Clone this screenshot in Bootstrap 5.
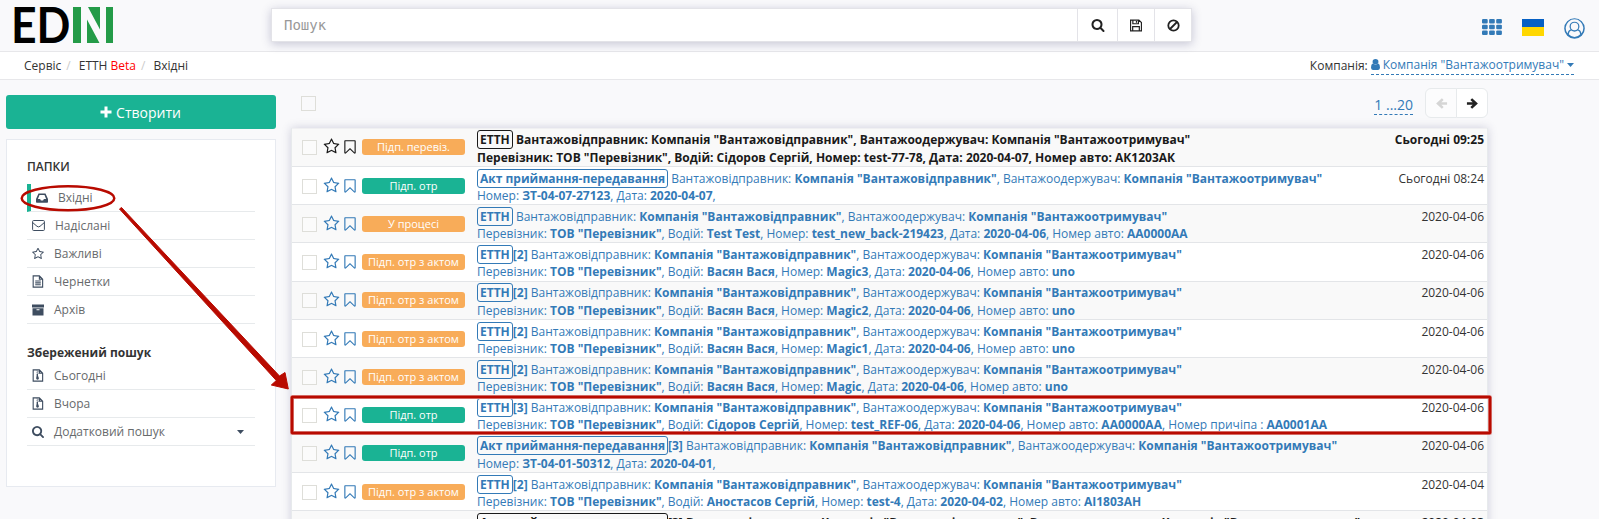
<!DOCTYPE html>
<html lang="uk">
<head>
<meta charset="utf-8">
<title>EDIN – Вхідні</title>
<link rel="stylesheet" href="https://cdn.jsdelivr.net/npm/bootstrap@5.3.0/dist/css/bootstrap.min.css">
<style>
  body { font-family: "Open Sans", "Noto Sans", sans-serif; font-size: 12px; line-height: 17.14px; color: #333; background: #f9f9fb; height: 519px; overflow: hidden; position: relative; }
  svg { display: block; fill: currentColor; flex: none; }
  .topbar { height: 52px; border-bottom: 1px solid #e7e7ea; padding-left: 15px; }
  .brand { width: 98px; margin-top: 7px; margin-right: 158px; overflow: visible; }
  .finder { width: 921px; height: 34px; margin-top: 8px; border: 1px solid #e3e3e8; background: #fff; box-shadow: 0 2px 9px rgba(60, 60, 110, .27); }
  .finder input { border: 0; padding: 0 12px; font: 14px "DejaVu Sans Mono", monospace; outline: 0; background: none; }
  .finder input::placeholder { color: #999; opacity: 1; }
  .finder button { border: 0; border-left: 1px solid #e3e3e8; background: #fff; padding: 0; color: #222; }
  .tools { color: #337ab7; padding-right: 14px; height: 54px; }
  .flag { width: 22px; height: 17px; background: linear-gradient(#0660c4 50%, #ffd700 50%); }
  .crumbs { height: 28px; background: #fff; border-bottom: 1px solid #e7e7ea; padding: 0 25px 0 24px; }
  .crumbs .sep { color: #ccc; padding: 0 8px 0 5px; }
  .dashed { color: #337ab7; border-bottom: 1px dashed #337ab7; text-decoration: none; }
  .side { width: 270px; margin: 15px 0 0 6px; }
  .btn-create { height: 34px; background: #1ab394; color: #fff; border-radius: 3px; font-size: 14px; padding: 0 1px 0 0; border: 0; }
  .btn-create:hover { background: #18a689; color: #fff; }
  .folders { margin-top: 10px; height: 348px; background: #fff; border: 1px solid #e7eaf0; padding: 18px 20px 0; }
  .folders h2 { font-size: 12px; line-height: 17px; margin: 0; font-weight: 600; }
  .folders .entry { height: 28px; border-bottom: 1px solid #e7eaec; color: #676a6c; text-decoration: none; padding-left: 5px; }
  .entry svg { color: #3e4d60; margin-right: 10px; }
  .entry.current { border-left: 4px solid #1ab394; }
  .content { width: 1197px; margin-left: 15px; }
  .box { width: 15px; height: 15px; border: 1px solid #deded9; flex: none; }
  .listbar { height: 47.65px; padding: 16px 0 0 10px; }
  .pager { font-size: 14px; line-height: 18px; height: 19px; margin-right: 12px; }
  .turn { margin: -8px 0 0; }
  .turn button { width: 32px; height: 30px; border: 1px solid #e7eaec; background: #fff; padding: 0; }
  .docs { border: 1px solid #e7eaec; border-top: 0; box-shadow: 0 0 9px rgba(60, 60, 110, .22); }
  .docline { height: 38.25px; border-top: 1px solid #e3e5e8; background: #fff; color: #337ab7; padding: 2.85px 3px 0 10px; }
  .docline:first-child { border-top-color: #f0f0f2; padding-top: 2.4px; }
  .docline:nth-child(odd) { background-color: #f9f9f9; }
  .docline .box { margin-top: 9px; background: rgba(255,255,255,.4); }
  .docline .ico { margin: 7px 0 0 6px; }
  .docline .ico + .ico { margin: 8px 0 0 2px; }
  .state { width: 103px; height: 16px; margin: 8px 0 0 4px; border-radius: 3px; background: #f8ac59; color: #fff; font-size: 11px; line-height: 16px; text-align: center; flex: none; }
  .state.ok { background: #1ab394; }
  .about { margin-left: 12px; white-space: nowrap; flex: 1; }
  .about b, .kind { font-weight: 700; }
  .kind { border: 1px solid currentColor; border-radius: 3px; padding: 0 2px; }
  .when { color: #333; white-space: nowrap; }
  .unread, .unread .when { color: #1a1a1a; font-weight: 700; }
  .unread .about { line-height: 17.6px; }
  .notes { position: absolute; left: 0; top: 0; pointer-events: none; z-index: 5; }
</style>
<script src="https://cdn.jsdelivr.net/npm/bootstrap@5.3.0/dist/js/bootstrap.bundle.min.js"></script>
</head>
<body>
<svg width="0" height="0" class="position-absolute">
  <symbol id="star" viewBox="0 0 1792 1792"><path d="M1201 1004l306-297-422-62-189-382-189 382-422 62 306 297-73 421 378-199 377 199zm527-357q0 22-26 48l-363 354 86 500q1 7 1 20 0 50-41 50-19 0-40-12l-449-236-449 236q-22 12-40 12-21 0-31.500-14.500t-10.500-35.500q0-6 2-20l86-500-364-354q-25-27-25-48 0-37 56-46l502-73 225-455q19-41 49-41t49 41l225 455 502 73q56 9 56 46z"/></symbol>
  <symbol id="mark-o" viewBox="0 0 1792 1792"><path d="M1408 256h-1024v1242l423-406 89-85 89 85 423 406v-1242zm12-128q23 0 44 9 33 13 52.500 41t19.500 62v1289q0 34-19.500 62t-52.500 41q-19 8-44 8-48 0-83-32l-441-424-441 424q-36 33-83 33-23 0-44-9-33-13-52.500-41t-19.500-62v-1289q0-34 19.500-62t52.500-41q21-9 44-9h1048z"/></symbol>
  <symbol id="lens" viewBox="0 0 1792 1792"><path d="M1216 832q0-185-131.500-316.500t-316.500-131.500-316.500 131.500-131.500 316.500 131.500 316.500 316.500 131.500 316.500-131.500 131.500-316.500zm512 832q0 52-38 90t-90 38q-54 0-90-38l-343-342q-179 124-399 124-143 0-273.500-55.500t-225-150-150-225-55.500-273.500 55.500-273.500 150-225 225-150 273.500-55.500 273.500 55.500 225 150 150 225 55.500 273.500q0 220-124 399l343 343q37 37 37 90z"/></symbol>
  <symbol id="arrow" viewBox="0 0 14 14"><path d="M1 5.700h6.200L4.700 3.200 6.600 1.300 12.800 7l-6.200 5.700-1.900-1.900 2.500-2.500H1z"/></symbol>
  <symbol id="zip" viewBox="0 0 12 14"><path fill="none" stroke="currentColor" stroke-width="1.200" d="M.8 1h6.700l3.500 3.500v8.500H.8zM7.500 1v3.500H11"/><path d="M4.500 1.500h1v1h-1zM5.500 2.500h1v1h-1zM4.500 3.500h1v1h-1zM5.500 4.500h1v1h-1zM4.500 5.500h1.500v1.700l1 2.800q0 1.600-1.500 1.600T4 10l.5-2.800z"/></symbol>
</svg>

<header class="topbar d-flex align-items-start">
  <svg class="brand" width="98" height="37" viewBox="0 0 98 37" role="img" aria-label="EDIN">
    <text x="-4" y="36" textLength="59.500" lengthAdjust="spacingAndGlyphs" font-family="Lato, sans-serif" font-weight="700" font-size="50" fill="#000">ED</text>
    <path fill="#249b48" d="M58 0h8v36h-8zM73 0h12v22.500zM72 12.500l12.500 23.500H72zM91 0h7v36h-7z"/>
  </svg>
  <div class="finder d-flex">
    <input class="flex-fill" type="text" placeholder="Пошук" aria-label="Пошук">
    <button class="d-flex align-items-center justify-content-center" style="width:40px"><svg width="14" height="14"><use href="#lens"/></svg></button>
    <button class="d-flex align-items-center justify-content-center" style="width:37px"><svg width="12" height="13" viewBox="0 0 13 13"><path fill="none" stroke="currentColor" stroke-width="1.300" d="M.6.600h9l2.800 2.800v9H.6zM3.100.600v4h6v-4M2.900 12.400V7.800h7.200v4.600M7 1.500v2"/></svg></button>
    <button class="d-flex align-items-center justify-content-center" style="width:37px"><svg width="13" height="13" viewBox="0 0 13 13"><g fill="none" stroke="currentColor" stroke-width="1.800"><circle cx="6.500" cy="6.500" r="5.200"/><path d="M3 10l7-7"/></g></svg></button>
  </div>
  <div class="tools d-flex align-items-center ms-auto">
    <svg width="20" height="16" viewBox="0 0 20 18" preserveAspectRatio="none"><g id="g"><rect width="5.700" height="5" rx="1.200"/><rect x="7.100" width="5.700" height="5" rx="1.200"/><rect x="14.200" width="5.700" height="5" rx="1.200"/></g><use href="#g" y="6.500"/><use href="#g" y="13"/></svg>
    <div class="flag" style="margin:0 20px 0 20px"></div>
    <svg width="21" height="21" style="margin-top:2px" viewBox="0 0 22 22"><path d="M11 .200a10.800 10.800 0 1 0 0 21.600 10.800 10.800 0 0 0 0-21.600z"/><path fill="#f9f9fb" fill-rule="evenodd" d="M18.300 16.200A9.200 9.200 0 1 0 3.700 16.200c.5-2.300 1.500-3.600 3.200-4.100A5.200 5.200 0 0 1 5.800 9a5.200 5.200 0 1 1 10.400 0 5.200 5.200 0 0 1-1.100 3.100c1.700.500 2.700 1.800 3.200 4.100zM11 5a3.900 3.900 0 1 1 0 7.800A3.900 3.900 0 0 1 11 5zM7.400 13.200q3.600 2.400 7.200 0 2 .500 2.400 3.800Q14.500 19.800 11 19.800T5 17q.4-3.300 2.400-3.800z"/></svg>
  </div>
</header>

<nav class="crumbs d-flex align-items-center">
  <span>Сервіс</span><span class="sep">/</span><span>ЕТТН <span style="color:#f00">Beta</span></span><span class="sep">/</span><span>Вхідні</span>
  <span class="ms-auto" style="margin-right:3px">Компанія:</span>
  <a class="dashed d-flex align-items-center" href="#"><svg style="margin-right:3px" width="9" height="11" viewBox="0 0 8 11" preserveAspectRatio="none"><circle cx="4" cy="2.700" r="2.600"/><path d="M1.600 4.600Q4 6.600 6.400 4.600 8 5.300 8 8.600 8 11 6.300 11H1.700Q0 11 0 8.600 0 5.300 1.600 4.600z"/></svg>Компанія "Вантажоотримувач"<svg style="margin-left:3px" width="7" height="4" viewBox="0 0 7 4"><path d="M0 0h7L3.500 4z"/></svg></a>
</nav>

<main class="d-flex">
  <aside class="side">
    <button class="btn btn-create w-100 d-flex align-items-center justify-content-center"><svg class="me-1" width="12" height="12" viewBox="0 0 12 12"><path d="M4.500.500h3v4h4v3h-4v4h-3v-4h-4v-3h4z"/></svg>Створити</button>
    <div class="folders">
      <h2>ПАПКИ</h2>
      <div style="height:9px"></div>
      <a class="entry current d-flex align-items-center" href="#"><svg width="12" height="10" viewBox="0 0 12 10"><path fill-rule="evenodd" d="M2.500.500h7L12 6v3q0 .800-.8.800H.8Q0 9.800 0 9V6zM3.500 2L1.900 6h2.200l.8 1.500h2.200L7.900 6h2.200L8.500 2z"/></svg>Вхідні</a>
      <a class="entry d-flex align-items-center" href="#"><svg width="13" height="11" viewBox="0 0 13 11"><path fill="none" stroke="currentColor" d="M.6 1.500q0-1 1-1h9.800q1 0 1 1v8q0 1-1 1H1.600q-1 0-1-1zM.6 2.500L5 6.300q1.500 1.200 3 0l4.400-3.800"/></svg>Надіслані</a>
      <a class="entry d-flex align-items-center" href="#"><svg width="12" height="12" viewBox="64 96 1664 1664"><use href="#star" width="1792" height="1792"/></svg>Важливі</a>
      <a class="entry d-flex align-items-center" href="#"><svg width="12" height="13" viewBox="0 0 12 14"><path fill="none" stroke="currentColor" stroke-width="1.200" d="M.8 1h6.700l3.500 3.500v8.500H.8zM7.500 1v3.500H11M3 6.500h6M3 8.500h6M3 10.500h6"/></svg>Чернетки</a>
      <a class="entry d-flex align-items-center" href="#"><svg width="12" height="12" viewBox="0 0 12 12"><path fill-rule="evenodd" d="M0 .500h12v3H0zM.5 4.300h11v7.200H.5zM4.500 5.300v.900h3v-.9z"/></svg>Архів</a>
      <h2 style="font-weight:700;padding-top:20px;height:38px">Збережений пошук</h2>
      <a class="entry d-flex align-items-center" href="#"><svg width="12" height="13"><use href="#zip"/></svg>Сьогодні</a>
      <a class="entry d-flex align-items-center" href="#"><svg width="12" height="13"><use href="#zip"/></svg>Вчора</a>
      <a class="entry d-flex align-items-center" href="#"><svg width="12" height="12" viewBox="64 128 1664 1664"><use href="#lens" width="1792" height="1792"/></svg>Додатковий пошук<svg class="ms-auto" style="margin-right:11px" width="7" height="4" viewBox="0 0 7 4"><path d="M0 0h7L3.500 4z"/></svg></a>
    </div>
  </aside>

  <section class="content">
    <div class="listbar d-flex align-items-start">
      <div class="box"></div>
      <div class="d-flex align-items-start ms-auto">
        <a class="dashed pager" href="#">1 ...20</a>
        <div class="turn d-flex"><button class="rounded-start d-flex align-items-center justify-content-center" style="color:#d5d5d5;background:#fcfcfd"><svg width="13" height="13" style="transform:scaleX(-1)"><use href="#arrow"/></svg></button><button class="rounded-end d-flex align-items-center justify-content-center" style="margin-left:-1px;color:#222"><svg width="13" height="13"><use href="#arrow"/></svg></button></div>
      </div>
    </div>
    <div class="docs">
      <div class="docline unread d-flex align-items-start"><i class="box"></i><svg class="ico" width="17" height="17"><use href="#star"/></svg><svg class="ico" width="16" height="16"><use href="#mark-o"/></svg><span class="state fw-normal">Підп. перевіз.</span>
        <div class="about"><span class="kind">ЕТТН</span> Вантажовідправник: Компанія "Вантажовідправник", Вантажоодержувач: Компанія "Вантажоотримувач"<br>Перевізник: ТОВ "Перевізник", Водій: Сідоров Сергій, Номер: test-77-78, Дата: 2020-04-07, Номер авто: АК1203АК</div><span class="when">Сьогодні 09:25</span></div>
      <div class="docline d-flex align-items-start"><i class="box"></i><svg class="ico" width="17" height="17"><use href="#star"/></svg><svg class="ico" width="16" height="16"><use href="#mark-o"/></svg><span class="state ok">Підп. отр</span>
        <div class="about"><span class="kind">Акт приймання-передавання</span> Вантажовідправник: <b>Компанія "Вантажовідправник"</b>, Вантажоодержувач: <b>Компанія "Вантажоотримувач"</b><br>Номер: <b>ЗТ-04-07-27123</b>, Дата: <b>2020-04-07</b>,</div><span class="when">Сьогодні 08:24</span></div>
      <div class="docline d-flex align-items-start"><i class="box"></i><svg class="ico" width="17" height="17"><use href="#star"/></svg><svg class="ico" width="16" height="16"><use href="#mark-o"/></svg><span class="state">У процесі</span>
        <div class="about"><span class="kind">ЕТТН</span> Вантажовідправник: <b>Компанія "Вантажовідправник"</b>, Вантажоодержувач: <b>Компанія "Вантажоотримувач"</b><br>Перевізник: <b>ТОВ "Перевізник"</b>, Водій: <b>Test Test</b>, Номер: <b>test_new_back-219423</b>, Дата: <b>2020-04-06</b>, Номер авто: <b>АА0000АА</b></div><span class="when">2020-04-06</span></div>
      <div class="docline d-flex align-items-start"><i class="box"></i><svg class="ico" width="17" height="17"><use href="#star"/></svg><svg class="ico" width="16" height="16"><use href="#mark-o"/></svg><span class="state">Підп. отр з актом</span>
        <div class="about"><span class="kind">ЕТТН</span><b>[2]</b> Вантажовідправник: <b>Компанія "Вантажовідправник"</b>, Вантажоодержувач: <b>Компанія "Вантажоотримувач"</b><br>Перевізник: <b>ТОВ "Перевізник"</b>, Водій: <b>Васян Вася</b>, Номер: <b>Magic3</b>, Дата: <b>2020-04-06</b>, Номер авто: <b>uno</b></div><span class="when">2020-04-06</span></div>
      <div class="docline d-flex align-items-start"><i class="box"></i><svg class="ico" width="17" height="17"><use href="#star"/></svg><svg class="ico" width="16" height="16"><use href="#mark-o"/></svg><span class="state">Підп. отр з актом</span>
        <div class="about"><span class="kind">ЕТТН</span><b>[2]</b> Вантажовідправник: <b>Компанія "Вантажовідправник"</b>, Вантажоодержувач: <b>Компанія "Вантажоотримувач"</b><br>Перевізник: <b>ТОВ "Перевізник"</b>, Водій: <b>Васян Вася</b>, Номер: <b>Magic2</b>, Дата: <b>2020-04-06</b>, Номер авто: <b>uno</b></div><span class="when">2020-04-06</span></div>
      <div class="docline d-flex align-items-start"><i class="box"></i><svg class="ico" width="17" height="17"><use href="#star"/></svg><svg class="ico" width="16" height="16"><use href="#mark-o"/></svg><span class="state">Підп. отр з актом</span>
        <div class="about"><span class="kind">ЕТТН</span><b>[2]</b> Вантажовідправник: <b>Компанія "Вантажовідправник"</b>, Вантажоодержувач: <b>Компанія "Вантажоотримувач"</b><br>Перевізник: <b>ТОВ "Перевізник"</b>, Водій: <b>Васян Вася</b>, Номер: <b>Magic1</b>, Дата: <b>2020-04-06</b>, Номер авто: <b>uno</b></div><span class="when">2020-04-06</span></div>
      <div class="docline d-flex align-items-start"><i class="box"></i><svg class="ico" width="17" height="17"><use href="#star"/></svg><svg class="ico" width="16" height="16"><use href="#mark-o"/></svg><span class="state">Підп. отр з актом</span>
        <div class="about"><span class="kind">ЕТТН</span><b>[2]</b> Вантажовідправник: <b>Компанія "Вантажовідправник"</b>, Вантажоодержувач: <b>Компанія "Вантажоотримувач"</b><br>Перевізник: <b>ТОВ "Перевізник"</b>, Водій: <b>Васян Вася</b>, Номер: <b>Magic</b>, Дата: <b>2020-04-06</b>, Номер авто: <b>uno</b></div><span class="when">2020-04-06</span></div>
      <div class="docline d-flex align-items-start"><i class="box"></i><svg class="ico" width="17" height="17"><use href="#star"/></svg><svg class="ico" width="16" height="16"><use href="#mark-o"/></svg><span class="state ok">Підп. отр</span>
        <div class="about"><span class="kind">ЕТТН</span><b>[3]</b> Вантажовідправник: <b>Компанія "Вантажовідправник"</b>, Вантажоодержувач: <b>Компанія "Вантажоотримувач"</b><br>Перевізник: <b>ТОВ "Перевізник"</b>, Водій: <b>Сідоров Сергій</b>, Номер: <b>test_REF-06</b>, Дата: <b>2020-04-06</b>, Номер авто: <b>АА0000АА</b>, Номер причіпа : <b>АА0001АА</b></div><span class="when">2020-04-06</span></div>
      <div class="docline d-flex align-items-start"><i class="box"></i><svg class="ico" width="17" height="17"><use href="#star"/></svg><svg class="ico" width="16" height="16"><use href="#mark-o"/></svg><span class="state ok">Підп. отр</span>
        <div class="about"><span class="kind">Акт приймання-передавання</span><b>[3]</b> Вантажовідправник: <b>Компанія "Вантажовідправник"</b>, Вантажоодержувач: <b>Компанія "Вантажоотримувач"</b><br>Номер: <b>ЗТ-04-01-50312</b>, Дата: <b>2020-04-01</b>,</div><span class="when">2020-04-06</span></div>
      <div class="docline d-flex align-items-start"><i class="box"></i><svg class="ico" width="17" height="17"><use href="#star"/></svg><svg class="ico" width="16" height="16"><use href="#mark-o"/></svg><span class="state">Підп. отр з актом</span>
        <div class="about"><span class="kind">ЕТТН</span><b>[2]</b> Вантажовідправник: <b>Компанія "Вантажовідправник"</b>, Вантажоодержувач: <b>Компанія "Вантажоотримувач"</b><br>Перевізник: <b>ТОВ "Перевізник"</b>, Водій: <b>Аностасов Сергій</b>, Номер: <b>test-4</b>, Дата: <b>2020-04-02</b>, Номер авто: <b>АІ1803АН</b></div><span class="when">2020-04-04</span></div>
      <div class="docline unread d-flex align-items-start"><i class="box"></i><svg class="ico" width="17" height="17"><use href="#star"/></svg><svg class="ico" width="16" height="16"><use href="#mark-o"/></svg><span class="state fw-normal invisible"></span>
        <div class="about"><span class="kind">Акт приймання-передавання</span>[3] Вантажовідправник: Компанія "Вантажовідправник", Вантажоодержувач: Компанія "Вантажоотримувач"</div><span class="when">2020-04-03</span></div>
    </div>
  </section>
</main>

<svg class="notes" width="1599" height="519" viewBox="0 0 1599 519">
  <g fill="none" stroke="#b80a00">
    <ellipse cx="68" cy="198.300" rx="46.300" ry="12" stroke-width="2.500"/>
    <rect x="292" y="397" width="1198" height="36" rx=".5" stroke-width="4" stroke="#dc8a85"/>
    <rect x="292" y="397" width="1198" height="36" rx=".5" stroke-width="2.600"/>
  </g>
  <path fill="#b80a00" stroke="#b80a00" stroke-linejoin="round" d="M121.500 207.500L279.500 376l5.500-3.500 3.300 16.500-17-4 5-4.500L119.500 209z"/>
</svg>
</body>
</html>
